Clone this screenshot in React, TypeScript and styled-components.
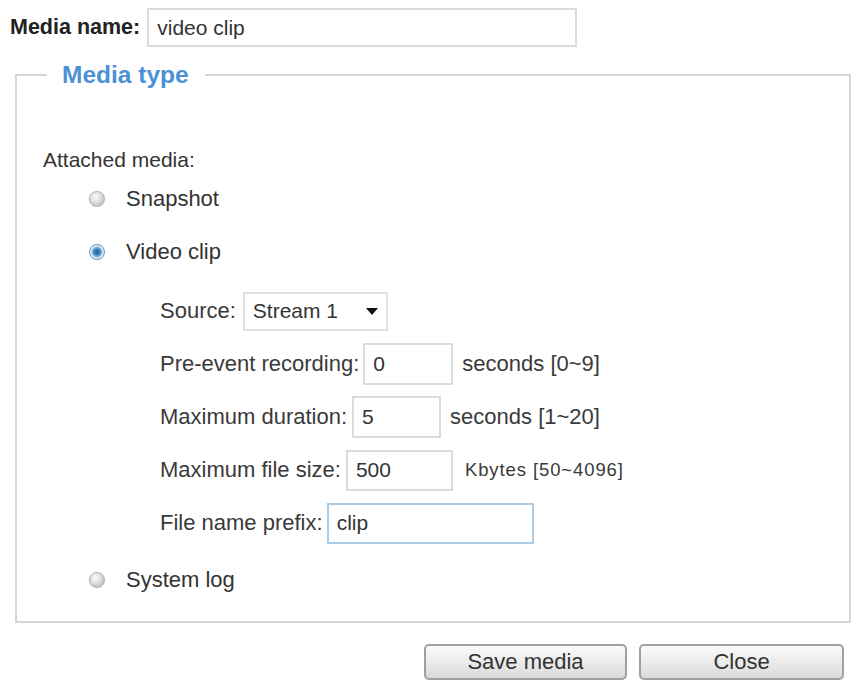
import React from 'react';
import styled, { createGlobalStyle } from 'styled-components';

const GlobalStyle = createGlobalStyle`
    html, body {
        margin: 0;
        padding: 0;
        background: #ffffff;
    }
    body {
        font-family: "Liberation Sans", Arial, sans-serif;
        color: #333333;
    }
`;

const Page = styled.div`
    width: 853px;
    height: 684px;
    padding: 8px 0 0 10px;
    box-sizing: border-box;
    overflow: hidden;
`;

const NameRow = styled.div`
    display: flex;
    align-items: center;
    height: 39px;
`;

const BoldLabel = styled.label`
    font-size: 21.5px;
    font-weight: bold;
    color: #222;
`;

const TextBox = styled.input<{ $w: number; $h?: number; $focus?: boolean }>`
    width: ${(p) => p.$w}px;
    height: ${(p) => p.$h ?? 42}px;
    box-sizing: border-box;
    border: 2px solid ${(p) => (p.$focus ? '#a9cde6' : '#dcdcdc')};
    border-radius: 0;
    padding: 0 0 0 8px;
    font-family: "Liberation Sans", Arial, sans-serif;
    font-size: 21px;
    color: #333;
    background: #fff;
    outline: none;
`;

const FieldSet = styled.fieldset`
    margin: 14px 0 0 5px;
    width: 836px;
    box-sizing: border-box;
    border: 2px solid #d6d6d6;
    padding: 0 0 26px 0;
`;

const Legend = styled.legend`
    margin-left: 30px;
    padding: 0 16px 0 15px;
    font-size: 24.5px;
    font-weight: bold;
    color: #4b91d6;
    line-height: 28px;
`;

const Caption = styled.div`
    margin: 58px 0 0 26px;
    font-size: 21px;
    line-height: 26px;
    color: #333;
`;

const RadioRow = styled.div<{ $top: number }>`
    display: flex;
    align-items: center;
    height: 30px;
    margin: ${(p) => p.$top}px 0 0 72px;
    gap: 21px;
    font-size: 22px;
    color: #333;
`;

const RadioDot = styled.span<{ $on?: boolean }>`
    width: 16px;
    height: 16px;
    border-radius: 50%;
    box-sizing: border-box;
    border: 1px solid ${(p) => (p.$on ? '#7d9bb5' : '#b5b5b5')};
    background: ${(p) =>
        p.$on
            ? 'radial-gradient(circle at 50% 50%, #1f5f92 0, #3c86bf 3px, #8fc3e6 5px, #e3eef6 6px, #c9d7e2 8px)'
            : 'radial-gradient(circle at 40% 35%, #fafafa 0, #e2e2e2 5px, #c8c8c8 8px)'};
    box-shadow: 0 0 1px rgba(0, 0, 0, 0.2);
`;

const SubBlock = styled.div`
    display: flex;
    flex-direction: column;
    gap: 9px;
    margin: 22px 0 0 143px;
`;

const SubRow = styled.div`
    display: flex;
    align-items: center;
    height: 44px;
    font-size: 22px;
    color: #3a3a3a;
`;

const SubLabel = styled.span<{ $gap: number }>`
    margin-right: ${(p) => p.$gap}px;
`;

const Unit = styled.span<{ $gap: number; $small?: boolean }>`
    margin-left: ${(p) => p.$gap}px;
    font-size: ${(p) => (p.$small ? '18.5px' : '22px')};
    letter-spacing: ${(p) => (p.$small ? '0.9px' : '0')};
`;

const SelectBox = styled.div`
    display: flex;
    align-items: center;
    justify-content: space-between;
    width: 145px;
    height: 39px;
    box-sizing: border-box;
    border: 2px solid #e0e0e0;
    padding: 0 8px 0 8px;
    font-size: 21px;
    color: #333;
    background: #fff;
`;

const Buttons = styled.div`
    display: flex;
    justify-content: flex-end;
    gap: 12px;
    margin: 21px 9px 0 0;
`;

const Button = styled.button<{ $w: number }>`
    width: ${(p) => p.$w}px;
    height: 36px;
    border: 2px solid #a0a0a0;
    border-radius: 5px;
    background: linear-gradient(#fbfbfb, #e9e9e9 55%, #dadada);
    font-family: "Liberation Sans", Arial, sans-serif;
    font-size: 22px;
    color: #333;
    padding: 0;
`;

const Caret = () => (
    <svg width="12" height="7" viewBox="0 0 12 7">
        <path d="M0 0 L12 0 L6 7 Z" fill="#111" />
    </svg>
);

export default function App() {
    return (
        <Page>
            <GlobalStyle />
            <NameRow>
                <BoldLabel>Media name:</BoldLabel>
                <TextBox $w={430} $h={39} defaultValue="video clip" readOnly style={{ marginLeft: 7 }} />
            </NameRow>

            <FieldSet>
                <Legend>Media type</Legend>
                <Caption>Attached media:</Caption>

                <RadioRow $top={11}>
                    <RadioDot />
                    Snapshot
                </RadioRow>
                <RadioRow $top={23}>
                    <RadioDot $on />
                    Video clip
                </RadioRow>

                <SubBlock>
                    <SubRow>
                        <SubLabel $gap={7}>Source:</SubLabel>
                        <SelectBox>
                            Stream 1
                            <Caret />
                        </SelectBox>
                    </SubRow>
                    <SubRow>
                        <SubLabel $gap={4}>Pre-event recording:</SubLabel>
                        <TextBox $w={90} defaultValue="0" readOnly />
                        <Unit $gap={9}>seconds [0~9]</Unit>
                    </SubRow>
                    <SubRow>
                        <SubLabel $gap={5}>Maximum duration:</SubLabel>
                        <TextBox $w={89} defaultValue="5" readOnly />
                        <Unit $gap={9}>seconds [1~20]</Unit>
                    </SubRow>
                    <SubRow>
                        <SubLabel $gap={5}>Maximum file size:</SubLabel>
                        <TextBox $w={107} $h={41} defaultValue="500" readOnly />
                        <Unit $gap={12} $small>Kbytes [50~4096]</Unit>
                    </SubRow>
                    <SubRow>
                        <SubLabel $gap={4}>File name prefix:</SubLabel>
                        <TextBox $w={207} $h={41} $focus defaultValue="clip" readOnly />
                    </SubRow>
                </SubBlock>

                <RadioRow $top={20}>
                    <RadioDot />
                    System log
                </RadioRow>
            </FieldSet>

            <Buttons>
                <Button $w={203}>Save media</Button>
                <Button $w={205}>Close</Button>
            </Buttons>
        </Page>
    );
}
